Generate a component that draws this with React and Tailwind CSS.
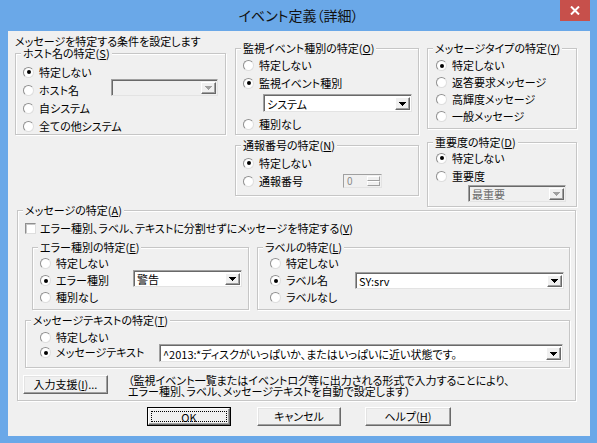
import React from 'react';

const K = ({ k }) => <span className="underline">{k}</span>;

const Group = ({ title, className = '', children }) => (
    <fieldset className={"border border-[#c6c6c6] shadow-[inset_1px_1px_0_#fff,1px_1px_0_#fff] " + className}>
        <legend className="ml-[5px] px-[2px] leading-[13px] bg-[#f0f0f0] whitespace-nowrap">{title}</legend>
        {children}
    </fieldset>
);

const Radio = ({ checked, label, className = 'h-[18px]' }) => (
    <div className={"flex items-center gap-[5px] whitespace-nowrap " + className}>
        <span className="w-[11px] h-[11px] shrink-0 rounded-full bg-white border border-[#8f8f8f] border-r-[#dedede] border-b-[#dedede] flex items-center justify-center">
            {checked && <span className="w-[4px] h-[4px] rounded-full bg-black" />}
        </span>
        <span className="leading-[13px]">{label}</span>
    </div>
);

const Arrow = ({ disabled }) => (
    <div className="w-[15px] shrink-0 bg-[#f0f0f0] border border-t-white border-l-white border-r-[#696969] border-b-[#696969] shadow-[inset_-1px_-1px_0_#a0a0a0] flex items-center justify-center">
        <svg width="7" height="4" viewBox="0 0 7 4" shapeRendering="crispEdges">
            <path d="M0 0h7v1h-1v1h-1v1h-1v1h-1v-1h-1v-1h-1v-1h-1z" fill={disabled ? '#a0a0a0' : '#000'} />
        </svg>
    </div>
);

const Combo = ({ value, disabled, className = '' }) => (
    <div className={"flex shrink-0 border border-[#a0a0a0] border-r-[#e3e3e3] border-b-[#e3e3e3] shadow-[inset_1px_1px_0_#696969] pt-[2px] pl-[2px] pr-[1px] pb-[1px] " + (disabled ? "bg-[#f0f0f0] text-[#6d6d6d] " : "bg-white ") + className}>
        <div className="flex-1 flex items-center whitespace-nowrap leading-[12px] pl-[1px]">{value}</div>
        <Arrow disabled={disabled} />
    </div>
);

const Button = ({ children, className = '' }) => (
    <div className={"flex items-center justify-center bg-[#f0f0f0] border border-t-white border-l-white border-r-[#696969] border-b-[#696969] shadow-[inset_-1px_-1px_0_#a0a0a0,inset_1px_1px_0_#e3e3e3] leading-[13px] whitespace-nowrap " + className}>
        {children}
    </div>
);

export default function App() {
    return (
        <div className="w-[597px] h-[443px] bg-[#6aa8e8] flex flex-col overflow-hidden font-['Noto_Sans_CJK_JP',sans-serif] text-[11px] text-black [font-feature-settings:'palt']">
            {/* タイトルバー */}
            <div className="h-[31px] flex items-start shrink-0">
                <div className="w-[37px]" />
                <div className="flex-1 h-[30px] flex items-center justify-center text-[14px] text-[#111]">
                    イベント定義（詳細）
                </div>
                <div className="w-[30px] h-[21px] mr-[7px] bg-[#c7504b] flex items-center justify-center">
                    <svg width="10" height="9" viewBox="0 0 10 9">
                        <path d="M1 0.5L9 8.5M9 0.5L1 8.5" stroke="#fff" strokeWidth="2" />
                    </svg>
                </div>
            </div>

            {/* クライアント領域 */}
            <div className="ml-[8px] mr-[7px] h-[405px] shrink-0 bg-[#f0f0f0] pl-[7px] flex flex-col">
                <div className="h-[173px] flex items-start shrink-0">
                    {/* 左列 */}
                    <div className="w-[211px] pt-[4px] flex flex-col">
                        <div className="h-[12px] leading-[12px] whitespace-nowrap">メッセージを特定する条件を設定します</div>
                        <Group title={<>ホスト名の特定(<K k="S" />)</>} className="h-[88px]">
                            <div className="pl-[7px] pt-[3px] flex flex-col">
                                <Radio checked label="特定しない" />
                                <div className="flex items-start h-[18px]">
                                    <Radio label="ホスト名" className="w-[88px] h-[18px]" />
                                    <Combo disabled value="" className="w-[107px] h-[17px] -mt-[2px]" />
                                </div>
                                <Radio label="自システム" />
                                <Radio label="全ての他システム" />
                            </div>
                        </Group>
                    </div>

                    {/* 中央列 */}
                    <div className="w-[184px] ml-[9px] pt-[11px] flex flex-col">
                        <Group title={<>監視イベント種別の特定(<K k="O" />)</>} className="h-[93px]">
                            <div className="pl-[7px] pt-[1px] flex flex-col">
                                <Radio label="特定しない" />
                                <Radio checked label="監視イベント種別" />
                                <Combo value="システム" className="w-[149px] h-[18px] ml-[20px] mt-[2px]" />
                                <Radio label="種別なし" className="h-[18px] mt-[3px]" />
                            </div>
                        </Group>
                        <Group title={<>通報番号の特定(<K k="N" />)</>} className="h-[57px] mt-[4px]">
                            <div className="pl-[7px] pt-[2px] flex flex-col">
                                <Radio checked label="特定しない" />
                                <div className="flex items-start h-[18px]">
                                    <Radio label="通報番号" className="w-[100px] h-[18px]" />
                                    <div className="w-[39px] h-[14px] mt-[2px] flex border border-[#a0a0a0] border-r-[#e3e3e3] border-b-[#e3e3e3] bg-[#f0f0f0] text-[#8a8a8a] text-[10px] leading-[12px]">
                                        <span className="flex-1 pl-[3px]">0</span>
                                        <div className="w-[13px] flex flex-col m-[1px]">
                                            <div className="flex-1 border border-t-white border-l-white border-r-[#a0a0a0] border-b-[#a0a0a0]" />
                                            <div className="flex-1 border border-t-white border-l-white border-r-[#a0a0a0] border-b-[#a0a0a0]" />
                                        </div>
                                    </div>
                                </div>
                            </div>
                        </Group>
                    </div>

                    {/* 右列 */}
                    <div className="w-[150px] ml-[8px] pt-[11px] flex flex-col">
                        <Group title={<>メッセージタイプの特定(<K k="Y" />)</>} className="h-[87px]">
                            <div className="pl-[8px] pt-[2px] flex flex-col">
                                <Radio checked label="特定しない" className="h-[17px]" />
                                <Radio label="返答要求メッセージ" className="h-[17px]" />
                                <Radio label="高輝度メッセージ" className="h-[17px]" />
                                <Radio label="一般メッセージ" className="h-[17px]" />
                            </div>
                        </Group>
                        <Group title={<>重要度の特定(<K k="D" />)</>} className="h-[71px] mt-[7px]">
                            <div className="pl-[8px] flex flex-col">
                                <Radio checked label="特定しない" />
                                <Radio label="重要度" />
                                <Combo disabled value="最重要" className="w-[98px] h-[17px] ml-[32px]" />
                            </div>
                        </Group>
                    </div>
                </div>

                {/* メッセージの特定 */}
                <Group title={<>メッセージの特定(<K k="A" />)</>} className="w-[559px] h-[197px] ml-[2px] shrink-0">
                    <div className="pl-[7px] flex flex-col">
                        <div className="h-[18px] mt-[2px] flex items-center gap-[4px] whitespace-nowrap">
                            <span className="w-[11px] h-[11px] bg-white border border-[#8f8f8f] border-r-[#dedede] border-b-[#dedede] shadow-[inset_1px_1px_0_#c8c8c8]" />
                            <span className="leading-[13px]">エラー種別、ラベル、テキストに分割せずにメッセージを特定する(<K k="V" />)</span>
                        </div>

                        <div className="flex mt-[4px]">
                            <Group title={<>エラー種別の特定(<K k="E" />)</>} className="w-[217px] h-[69px] ml-[7px]">
                                <div className="pl-[7px] pt-[1px] flex flex-col">
                                    <Radio label="特定しない" className="h-[17px]" />
                                    <div className="flex items-start h-[17px]">
                                        <Radio checked label="エラー種別" className="w-[93px] h-[17px]" />
                                        <Combo value="警告" className="w-[109px] h-[17px] -mt-[2px]" />
                                    </div>
                                    <Radio label="種別なし" className="h-[17px]" />
                                </div>
                            </Group>
                            <Group title={<>ラベルの特定(<K k="L" />)</>} className="w-[313px] h-[69px] ml-[8px]">
                                <div className="pl-[12px] pt-[1px] flex flex-col">
                                    <Radio label="特定しない" className="h-[17px]" />
                                    <div className="flex items-start h-[17px]">
                                        <Radio checked label="ラベル名" className="w-[85px] h-[17px]" />
                                        <Combo value="SY:srv" className="w-[209px] h-[17px]" />
                                    </div>
                                    <Radio label="ラベルなし" className="h-[17px]" />
                                </div>
                            </Group>
                        </div>

                        <Group title={<>メッセージテキストの特定(<K k="T" />)</>} className="w-[545px] h-[54px] mt-[4px]">
                            <div className="pl-[14px] pt-[3px] flex flex-col">
                                <Radio label="特定しない" className="h-[15px]" />
                                <div className="flex items-start h-[15px]">
                                    <Radio checked label="メッセージテキスト" className="w-[119px] h-[15px]" />
                                    <Combo value="^2013:*ディスクがいっぱいか、またはいっぱいに近い状態です。" className="w-[404px] h-[18px] -mt-[1px]" />
                                </div>
                            </div>
                        </Group>

                        <div className="flex items-start mt-[7px]">
                            <Button className="w-[85px] h-[19px] -ml-[2px]">入力支援(<K k="I" />)...</Button>
                            <div className="ml-[20px] leading-[11px] whitespace-nowrap">
                                <div>（監視イベント一覧またはイベントログ等に出力される形式で入力することにより、</div>
                                <div>エラー種別、ラベル、メッセージテキストを自動で設定します）</div>
                            </div>
                        </div>
                    </div>
                </Group>

                {/* ボタン */}
                <div className="flex mt-[6px]">
                    <div className="w-[84px] h-[19px] ml-[132px] border border-black flex">
                        <div className="flex-1 flex bg-[#f0f0f0] border border-t-white border-l-white border-r-[#696969] border-b-[#696969] shadow-[inset_-1px_-1px_0_#a0a0a0] p-[2px]">
                            <div className="flex-1 border border-dotted border-black flex items-center justify-center leading-[12px]">OK</div>
                        </div>
                    </div>
                    <Button className="w-[84px] h-[19px] ml-[26px]">キャンセル</Button>
                    <Button className="w-[86px] h-[19px] ml-[24px]">ヘルプ(<K k="H" />)</Button>
                </div>
            </div>
        </div>
    );
}
